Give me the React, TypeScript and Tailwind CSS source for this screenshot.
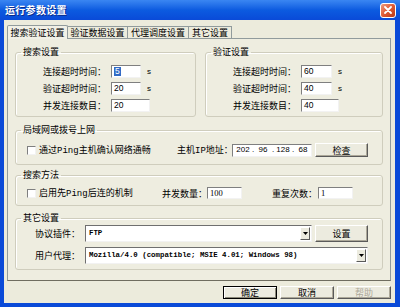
import React from "react";

function Input({ w, children }: { w: string; children?: React.ReactNode }) {
  return (
    <div
      className={`${w} h-full bg-white border border-t-[#7f7f7f] border-l-[#7f7f7f] border-r-[#f2f2f2] border-b-[#f2f2f2] flex items-center pl-[2px] text-[8.5px] leading-none font-['Liberation_Sans',sans-serif] text-black`}
    >
      {children}
    </div>
  );
}

function Btn({ w, children, def, disabled }: { w: string; children: React.ReactNode; def?: boolean; disabled?: boolean }) {
  return (
    <div
      className={`${w} h-full flex items-center justify-center bg-[#ecebdf] text-[9px] leading-none ${
        def
          ? "border border-black shadow-[inset_1px_1px_0_#ffffff,inset_-1px_-1px_0_#8a8878]"
          : "border border-t-white border-l-white border-r-[#5a5a5a] border-b-[#5a5a5a] shadow-[inset_-1px_-1px_0_#aca899]"
      } ${disabled ? "text-[#aca899]" : "text-black"}`}
    >
      {children}
    </div>
  );
}

function Check() {
  return (
    <div className="w-[9px] h-[9px] bg-white border border-t-[#7f7f7f] border-l-[#7f7f7f] border-r-[#f2f2f2] border-b-[#f2f2f2] shrink-0" />
  );
}

function Combo({ w, children }: { w: string; children: React.ReactNode }) {
  return (
    <div
      className={`${w} h-full bg-white border border-t-[#6f6f6f] border-l-[#6f6f6f] border-r-[#f2f2f2] border-b-[#f2f2f2] flex items-center`}
    >
      <div className="flex-1 pl-[3px] text-[7.4px] font-bold font-['Liberation_Mono',monospace] text-black whitespace-nowrap overflow-hidden leading-none">
        {children}
      </div>
      <div className="w-[10px] h-[13px] mr-[1px] bg-[#ecebdf] border border-t-white border-l-white border-r-[#5a5a5a] border-b-[#5a5a5a] flex items-center justify-center">
        <svg width="5" height="3" viewBox="0 0 5 3">
          <path d="M0 0 H5 L2.5 3 Z" fill="#000" />
        </svg>
      </div>
    </div>
  );
}

function Group({ title, className, children }: { title: string; className: string; children: React.ReactNode }) {
  return (
    <fieldset className={`border border-[#cfcdbd] rounded-[3px] shadow-[inset_1px_1px_0_#ffffff] ${className}`}>
      <legend className="ml-[5px] px-[2px] text-[9px] leading-[10px] text-black">{title}</legend>
      {children}
    </fieldset>
  );
}

function Row({ label, w, unit, children }: { label: string; w: string; unit?: boolean; children: React.ReactNode }) {
  return (
    <div className="flex items-center h-[13px]">
      <div className="w-[63px] text-[9px] leading-none whitespace-nowrap">{label}</div>
      <div className="ml-[5px] h-full">
        <Input w={w}>{children}</Input>
      </div>
      {unit && <div className="ml-[6px] text-[8px] font-['Liberation_Sans',sans-serif] leading-none">s</div>}
    </div>
  );
}

const mono = "font-['Liberation_Mono',monospace]";

export default function App() {
  return (
    <div className="w-[400px] h-[307px] bg-[#0a4ad8] flex flex-col font-['Noto_Sans_CJK_SC','Noto_Sans',sans-serif] text-black overflow-hidden">
      {/* title bar */}
      <div className="h-[20px] shrink-0 flex items-center justify-between pl-[5px] pr-[4px] bg-linear-to-b from-[#3a86f2] via-[#0c5be0] to-[#0a4ad8]">
        <span className="text-white text-[10px] font-bold leading-none tracking-[0.3px] [text-shadow:1px_1px_0_#0a2a8a]">运行参数设置</span>
        <div className="w-[16px] h-[15px] rounded-[3px] border border-white bg-linear-to-br from-[#ec9a7c] via-[#e05a34] to-[#b83a18] flex items-center justify-center">
          <svg width="8" height="8" viewBox="0 0 8 8">
            <path d="M1 1 L7 7 M7 1 L1 7" stroke="#fff" strokeWidth="1.8" strokeLinecap="round" />
          </svg>
        </div>
      </div>
      {/* body */}
      <div className="flex-1 ml-[4px] mr-[5px] mb-[4px] bg-[#ecebdc] flex flex-col pl-[3px] pr-[4px] pt-[4px]">
        {/* tabs */}
        <div className="h-[14px] flex items-end text-[9px] leading-none">
          <div className="w-[61px] h-[14px] bg-[#f1f0e6] border border-b-0 border-[#919b9c] rounded-t-[2px] flex items-center justify-center relative top-[1px]">
            搜索验证设置
          </div>
          <div className="w-[60px] h-[12px] border border-b-0 border-l-0 border-[#919b9c] flex items-center justify-center">验证数据设置</div>
          <div className="w-[61px] h-[12px] border border-b-0 border-l-0 border-[#919b9c] flex items-center justify-center">代理调度设置</div>
          <div className="w-[43px] h-[12px] border border-b-0 border-l-0 border-[#919b9c] flex items-center justify-center">其它设置</div>
        </div>
        {/* panel */}
        <div className="h-[243px] border border-[#919b9c] border-b-[#6f6d60] bg-[#eeede0] flex flex-col pl-[7px] pr-[7px] pt-[8px]">
          <div className="flex gap-[9px]">
            <Group title="搜索设置" className="w-[181px] h-[70px]">
              <div className="flex flex-col gap-[4px] pt-[8px] pl-[27px]">
                <Row label="连接超时时间：" w="w-[30px]" unit>
                  <span className="bg-[#316ac5] text-white px-[1px]">5</span>
                </Row>
                <Row label="验证超时时间：" w="w-[30px]" unit>20</Row>
                <Row label="并发连接数目：" w="w-[39px]">20</Row>
              </div>
            </Group>
            <Group title="验证设置" className="flex-1 h-[70px]">
              <div className="flex flex-col gap-[4px] pt-[8px] pl-[27px]">
                <Row label="连接超时时间：" w="w-[31px]" unit>60</Row>
                <Row label="验证超时时间：" w="w-[31px]" unit>40</Row>
                <Row label="并发连接数目：" w="w-[38px]">40</Row>
              </div>
            </Group>
          </div>

          <Group title="局域网或拨号上网" className="mt-[8px] h-[40px]">
            <div className="flex items-center h-[14px] mt-[8px] text-[9px] leading-none">
              <div className="w-[161px] pl-[11px] flex items-center whitespace-nowrap">
                <Check />
                <span className="ml-[3px]">
                  通过<span className={mono}>Ping</span>主机确认网络通畅
                </span>
              </div>
              <div className="w-[55px] whitespace-nowrap">
                主机<span className={mono}>IP</span>地址：
              </div>
              <div className="h-[13px]">
                <Input w="w-[80px]">
                  <div className="flex items-center text-[8px] w-full">
                    <span className="w-[16px] text-center">202</span>
                    <span className="w-[4px] text-center">.</span>
                    <span className="w-[16px] text-center">96</span>
                    <span className="w-[4px] text-center">.</span>
                    <span className="w-[16px] text-center">128</span>
                    <span className="w-[4px] text-center">.</span>
                    <span className="w-[16px] text-center">68</span>
                  </div>
                </Input>
              </div>
              <div className="ml-[3px] h-[14px]">
                <Btn w="w-[53px]">检查</Btn>
              </div>
            </div>
          </Group>

          <Group title="搜索方法" className="mt-[5px] h-[36px]">
            <div className="flex items-center h-[12px] mt-[7px] text-[9px] leading-none">
              <div className="w-[146px] pl-[11px] flex items-center whitespace-nowrap">
                <Check />
                <span className="ml-[3px]">
                  启用先<span className={mono}>Ping</span>后连的机制
                </span>
              </div>
              <div className="w-[45px] whitespace-nowrap">并发数量：</div>
              <div className="h-full">
                <Input w="w-[35px]">
                  <span className="font-['Liberation_Serif',serif]">100</span>
                </Input>
              </div>
              <div className="ml-[30px] w-[45px] whitespace-nowrap">重复次数：</div>
              <div className="ml-[1px] h-full">
                <Input w="w-[35px]">
                  <span className="font-['Liberation_Serif',serif]">1</span>
                </Input>
              </div>
            </div>
          </Group>

          <Group title="其它设置" className="mt-[7px] h-[57px]">
            <div className="flex flex-col gap-[5px] pt-[2px] pl-[19px] text-[9px] leading-none">
              <div className="flex items-center h-[17px]">
                <div className="w-[50px] whitespace-nowrap">协议插件：</div>
                <Combo w="w-[227px]">FTP</Combo>
                <div className="ml-[3px] h-full">
                  <Btn w="w-[53px]">设置</Btn>
                </div>
              </div>
              <div className="flex items-center h-[17px]">
                <div className="w-[50px] whitespace-nowrap">用户代理：</div>
                <Combo w="w-[283px]">Mozilla/4.0 (compatible; MSIE 4.01; Windows 98)</Combo>
              </div>
            </div>
          </Group>
        </div>
        {/* buttons */}
        <div className="mt-[5px] h-[13px] flex justify-end gap-[3px]">
          <Btn w="w-[54px]" def>确定</Btn>
          <Btn w="w-[54px]">取消</Btn>
          <Btn w="w-[54px]" disabled>帮助</Btn>
        </div>
      </div>
    </div>
  );
}
